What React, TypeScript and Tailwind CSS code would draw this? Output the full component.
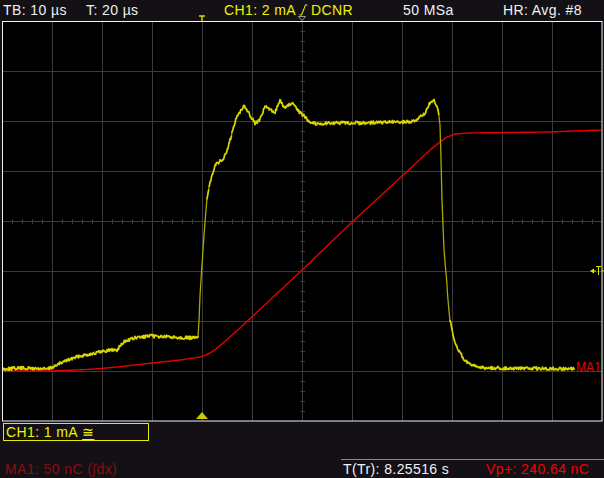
import React from "react";

type Pt = [number, number];

const YELLOW = "#e4e400";
const TRACE_YELLOW = "#d8d800";
const TRACE_DIM = "#a8a800";
const RED = "#e80000";

// channel 1 current, sketched as key points in screen pixels
const ch1Keys: Pt[] = [
  [3, 369], [20, 368], [48, 369], [55, 366], [65, 361], [80, 356], [95, 353],
  [110, 350], [117, 350], [120, 346], [125, 341], [135, 338], [150, 336],
  [170, 337], [190, 338], [197, 338], [198, 336], [199, 320], [200, 295],
  [202, 265], [203, 250], [205, 222], [207, 200], [210, 182], [215, 165],
  [222, 160], [224, 158], [228, 148], [232, 133], [235, 122], [238, 115],
  [244, 105], [250, 115], [255, 123], [260, 120], [265, 106], [270, 110],
  [275, 112], [280, 101], [285, 108], [292, 103], [298, 111], [303, 115],
  [310, 122], [318, 124], [330, 123], [360, 123], [400, 122], [410, 122],
  [418, 119], [425, 113], [430, 103], [434, 101], [438, 110], [440, 125],
  [441, 160], [442, 200], [444, 250], [446, 272], [448, 300], [450, 320],
  [453, 336], [458, 350], [465, 361], [473, 366], [485, 368], [574, 369],
];

// integrated charge (MA1)
const ma1Keys: Pt[] = [
  [3, 371], [50, 371], [77, 370], [95, 369], [117, 367], [152, 363],
  [180, 360], [200, 357], [205, 355.5], [210, 353], [216, 349], [223, 343],
  [231, 336], [240, 328], [300, 272], [350, 224], [400, 178], [430, 150],
  [440, 142], [447, 137], [455, 134], [470, 133], [548, 132], [601, 130],
];

function seeded(seed: number) {
  let s = seed;
  return () => {
    s = (s * 1103515245 + 12345) % 2147483648;
    return s / 2147483648;
  };
}

function samplePoints(keys: Pt[], noise: number, seed: number, step = 1) {
  const rnd = seeded(seed);
  const pts: Pt[] = [];
  for (let i = 0; i < keys.length - 1; i++) {
    const [x0, y0] = keys[i];
    const [x1, y1] = keys[i + 1];
    const steps = Math.max(1, Math.round((x1 - x0) / step));
    for (let k = 0; k < steps; k++) {
      const t = k / steps;
      pts.push([x0 + (x1 - x0) * t, y0 + (y1 - y0) * t + (rnd() - 0.5) * 2 * noise]);
    }
  }
  pts.push(keys[keys.length - 1]);
  return pts;
}

function toPath(pts: Pt[]) {
  return pts.map(([x, y], i) => `${i ? "L" : "M"}${x.toFixed(1)},${y.toFixed(1)}`).join(" ");
}

// fast edges are drawn fainter, as the scope spends less time there
function splitBySlope(pts: Pt[]) {
  let bright = "";
  let dim = "";
  for (let i = 0; i < pts.length - 1; i++) {
    const [x0, y0] = pts[i];
    const [x1, y1] = pts[i + 1];
    const seg = `M${x0.toFixed(1)},${y0.toFixed(1)} L${x1.toFixed(1)},${y1.toFixed(1)} `;
    if (Math.abs(y1 - y0) / Math.max(0.5, x1 - x0) > 6) dim += seg;
    else bright += seg;
  }
  return { bright, dim };
}

function Graticule() {
  const vlines = Array.from({ length: 11 }, (_, i) => 52.5 + i * 50);
  const hlines = Array.from({ length: 7 }, (_, i) => 50.5 + i * 50);
  const xticks = Array.from({ length: 59 }, (_, i) => 12.5 + i * 10);
  const yticks = Array.from({ length: 39 }, (_, i) => 10.5 + i * 10);
  return (
    <g stroke="#3b3b3b" strokeWidth={1}>
      {vlines.map((x) => (
        <line key={`v${x}`} x1={x} y1={0} x2={x} y2={400} />
      ))}
      {hlines.map((y) => (
        <line key={`h${y}`} x1={2} y1={y} x2={602} y2={y} />
      ))}
      {xticks.map((x) => (
        <line key={`tx${x}`} x1={x} y1={198} x2={x} y2={203} />
      ))}
      {yticks.map((y) => (
        <line key={`ty${y}`} x1={300} y1={y} x2={305} y2={y} />
      ))}
    </g>
  );
}

function Scope() {
  const ch1 = splitBySlope(samplePoints(ch1Keys, 1.4, 7, 0.7));
  const ma1 = toPath(samplePoints(ma1Keys, 0, 3));
  return (
    <svg width={604} height={401} viewBox="0 21 604 401" className="block">
      <rect x={2} y={21} width={600} height={400} fill="#000" />
      <g transform="translate(0 21)">
        <Graticule />
      </g>
      <path d={ma1} fill="none" stroke={RED} strokeWidth={1.4} />
      <path d={ch1.dim} fill="none" stroke={TRACE_DIM} strokeWidth={1.3} />
      <path d={ch1.bright} fill="none" stroke={TRACE_YELLOW} strokeWidth={1.7} strokeLinecap="square" />
      <rect x={2.5} y={21.5} width={599.5} height={399.5} fill="none" stroke="#f2f2f2" strokeWidth={1} />
      {/* trigger position at the bottom */}
      <polygon points="196,419 202,412 208,419" fill="#cccc00" />
      {/* trigger level */}
      <g stroke={YELLOW} strokeWidth={1} fill={YELLOW}>
        <polygon points="590,271 594,268.5 594,273.5" stroke="none" />
        <line x1={594} y1={271} x2={596} y2={271} />
        <line x1={596} y1={266.5} x2={601} y2={266.5} />
        <line x1={598.5} y1={266.5} x2={598.5} y2={275} />
        <line x1={601} y1={271} x2={604} y2={271} />
      </g>
      <text
        x={576}
        y={371.5}
        fill={RED}
        fontSize={14}
        textLength={25}
        lengthAdjust="spacingAndGlyphs"
        fontFamily="'Liberation Sans', Arial, sans-serif"
      >
        MA1
      </text>
    </svg>
  );
}

function EdgeIcon() {
  return (
    <svg width={9} height={12} viewBox="0 0 9 12" className="mx-[3px] inline-block">
      <path d="M0.5 11 H2.5 L6.5 1 H8.5" fill="none" stroke={YELLOW} strokeWidth={1.1} />
    </svg>
  );
}

function TopBar() {
  return (
    <div className="relative flex h-[21px] items-start text-[14px] leading-[20px] tracking-[0.4px] text-[#f0f0f0]">
      <span className="w-[86px] shrink-0 pl-[3px]">TB: 10 µs</span>
      <span className="w-[138px] shrink-0">T: 20 µs</span>
      <span className="flex w-[179px] shrink-0 items-center text-[#f2f200]">
        CH1: 2 mA
        <EdgeIcon />
        DCNR
      </span>
      <span className="w-[100px] shrink-0">50 MSa</span>
      <span>HR: Avg. #8</span>
      {/* trigger position and centre markers on the top edge */}
      <svg width={604} height={6} className="absolute left-0 top-[15px]">
        <line x1={199} y1={1} x2={205} y2={1} stroke={YELLOW} strokeWidth={1.4} />
        <line x1={202} y1={1} x2={202} y2={6} stroke={YELLOW} strokeWidth={1.4} />
        <polygon points="298.5,1.5 305.5,1.5 302,5.5" fill="none" stroke="#9a9a9a" strokeWidth={1} />
      </svg>
    </div>
  );
}

function BottomBar() {
  return (
    <div className="flex h-[56px] flex-col text-[14px] tracking-[0.4px]">
      <div className="ml-[3px] mt-[1px] flex h-[18px] w-[146px] items-center border border-[#e8e800] pl-[2px] leading-[16px] text-[#f2f200]">
        CH1: 1 mA <span className="ml-[4px] underline decoration-1 underline-offset-2">≅</span>
      </div>
      <div className="mt-[18px] flex h-[19px] items-start">
        <span className="w-[341px] shrink-0 pl-[5px] leading-[20px] text-[#8c0d0d]">MA1: 50 nC (∫dx)</span>
        <div className="flex h-[19px] grow border-t border-[#8a8a8a] leading-[18px]">
          <span className="w-[145px] shrink-0 pl-[2px] text-[#f2f2f2]">T(Tr): 8.25516 s</span>
          <span className="text-[#f00000]">Vp+: 240.64 nC</span>
        </div>
      </div>
    </div>
  );
}

export default function App() {
  return (
    <div
      className="h-[478px] w-[604px] overflow-hidden bg-[#131116]"
      style={{ fontFamily: "'Liberation Sans', Arial, sans-serif" }}
    >
      <TopBar />
      <Scope />
      <BottomBar />
    </div>
  );
}
